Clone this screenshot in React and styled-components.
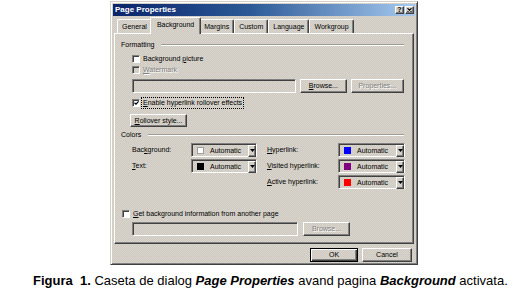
import { Fragment } from 'react';
import styled, { createGlobalStyle, css } from 'styled-components';

const GlobalStyle = createGlobalStyle`
  html, body { margin: 0; padding: 0; background: #fff; }
  body { font-family: "Liberation Sans", Arial, sans-serif; }
`;

const dither = css`
  background-color: #d4d0c8;
  background-image: repeating-conic-gradient(#dad6ce 0 25%, #cdc9c1 0 50%);
  background-size: 2px 2px;
`;

const raised = css`
  border: 1px solid;
  border-color: #fff #404040 #404040 #fff;
  box-shadow: inset -1px -1px #808080;
`;

const sunken = css`
  border: 1px solid;
  border-color: #808080 #fff #fff #808080;
  box-shadow: inset 1px 1px #404040;
`;

const Page = styled.div`
  width: 530px;
  height: 293px;
  display: flex;
  flex-direction: column;
  align-items: flex-start;
  overflow: hidden;
`;

const Dialog = styled.div`
  margin: 1px 0 0 110px;
  width: 308px;
  height: 264px;
  box-sizing: border-box;
  padding: 2px;
  ${dither}
  border: 1px solid;
  border-color: #d4d0c8 #404040 #404040 #d4d0c8;
  box-shadow: inset 1px 1px #fff, inset -1px -1px #808080;
  display: flex;
  flex-direction: column;
  font-size: 7px;
  line-height: 8px;
  color: #000;
`;

const TitleBar = styled.div`
  height: 12px;
  padding: 0 1px 0 2px;
  display: flex;
  align-items: center;
  justify-content: space-between;
  background: linear-gradient(90deg, #0a246a 0%, #2c5996 45%, #a6caf0 100%);
  color: #fff;
  font-weight: bold;
  font-size: 8px;
`;

const CaptionButtons = styled.div`
  display: flex;
  gap: 1px;
`;

const CapButton = styled.div`
  width: 9px;
  height: 8px;
  box-sizing: border-box;
  background: #d4d0c8;
  ${raised}
  display: flex;
  align-items: center;
  justify-content: center;
  color: #000;
  font-size: 7px;
  line-height: 6px;
`;

const Body = styled.div`
  flex: 1;
  padding: 1px 1px 0 1px;
  display: flex;
  flex-direction: column;
`;

const TabStrip = styled.div`
  height: 16px;
  padding-left: 3px;
  display: flex;
  align-items: flex-end;
`;

const Tab = styled.div`
  position: relative;
  z-index: ${p => (p.$active ? 1 : 0)};
  height: ${p => (p.$active ? 17 : 14)}px;
  margin: 0 ${p => (p.$active ? -2 : 0)}px ${p => (p.$active ? -1 : 0)}px;
  padding: ${p => (p.$active ? '0 6px 3px' : '1px 4px 0')};
  box-sizing: border-box;
  ${dither}
  border: 1px solid;
  border-color: #fff #404040 transparent #fff;
  border-bottom: none;
  border-radius: 2px 2px 0 0;
  box-shadow: inset -1px 0 #808080;
  display: flex;
  align-items: center;
  white-space: nowrap;
`;

const Panel = styled.div`
  height: 211px;
  box-sizing: border-box;
  padding: 7px 9px 0 6px;
  ${raised}
  display: flex;
  flex-direction: column;
`;

const GroupHeader = styled.div`
  height: 8px;
  margin-top: ${p => p.$mt || 0}px;
  display: flex;
  align-items: center;
  gap: 7px;
`;

const Rule = styled.div`
  flex: 1;
  border-top: 1px solid #a09c94;
  border-bottom: 1px solid #fff;
`;

const Row = styled.div`
  height: ${p => p.$h || 9}px;
  margin: ${p => p.$mt || 0}px 0 0 ${p => p.$ml || 0}px;
  display: flex;
  align-items: center;
  gap: ${p => p.$gap ?? 3}px;
`;

const CheckBox = styled.span`
  width: 8px;
  height: 8px;
  flex: none;
  box-sizing: border-box;
  ${sunken}
  background: ${p => (p.$disabled ? '#d4d0c8' : '#fff')};
  display: flex;
  align-items: center;
  justify-content: center;
`;

const Label = styled.span`
  white-space: nowrap;
  color: ${p => (p.$disabled ? '#808080' : '#000')};
  text-shadow: ${p => (p.$disabled ? '1px 1px #fff' : 'none')};
  outline: ${p => (p.$focus ? '1px dotted #000' : 'none')};
  padding: ${p => (p.$focus ? '1px 1px' : '0')};
`;

const Key = styled.span`
  text-decoration: underline;
`;

const Field = styled.div`
  width: ${p => p.$w}px;
  height: 14px;
  box-sizing: border-box;
  ${sunken}
`;

const Button = styled.div`
  width: ${p => p.$w}px;
  height: ${p => p.$h || 14}px;
  box-sizing: border-box;
  ${raised}
  ${p => p.$default && css`
    border-color: #000;
    box-shadow: inset 1px 1px #fff, inset -1px -1px #404040, inset -2px -2px #808080;
  `}
  display: flex;
  align-items: center;
  justify-content: center;
  white-space: nowrap;
  color: ${p => (p.$disabled ? '#808080' : '#000')};
  text-shadow: ${p => (p.$disabled ? '1px 1px #fff' : 'none')};
`;

const ColorGrid = styled.div`
  margin: 4px 0 0 11px;
  display: grid;
  grid-template-columns: 59px 66px 81px 67px;
  grid-auto-rows: 14px;
  row-gap: 2px;
  align-items: center;
`;

const ColorLabel = styled.span`
  padding-left: ${p => (p.$right ? 10 : 0)}px;
  white-space: nowrap;
`;

const Combo = styled.div`
  height: 14px;
  box-sizing: border-box;
  ${sunken}
  padding: 1px 0 0 5px;
  display: flex;
  align-items: center;
`;

const Swatch = styled.span`
  width: 7px;
  height: 7px;
  flex: none;
  box-sizing: border-box;
  border: 1px solid ${p => (p.$color === '#fff' ? '#a0a0a0' : p.$color)};
  background: ${p => p.$color};
  margin-right: 6px;
`;

const DropButton = styled.span`
  margin-left: auto;
  width: 8px;
  height: 12px;
  box-sizing: border-box;
  background: #d4d0c8;
  ${raised}
  display: flex;
  align-items: center;
  justify-content: center;
`;

const Footer = styled.div`
  margin-top: 4px;
  padding-right: 2px;
  display: flex;
  justify-content: flex-end;
  gap: 4px;
`;

const Caption = styled.p`
  margin: 8px 0 0 33px;
  font-family: "Liberation Sans", Arial, sans-serif;
  font-size: 13px;
  line-height: 15px;
  color: #000;
  white-space: nowrap;
`;

const Strong = styled.b`
  font-style: ${p => (p.$italic ? 'italic' : 'normal')};
`;

const Check = () => (
  <svg width="5" height="4" viewBox="0 0 5 4">
    <path d="M0.5 1.8 L2 3.2 L4.6 0.4" stroke="#000" strokeWidth="1.2" fill="none" />
  </svg>
);

const Arrow = () => (
  <svg width="5" height="3" viewBox="0 0 5 3">
    <path d="M0 0 H5 L2.5 3 Z" fill="#000" />
  </svg>
);

const CloseGlyph = () => (
  <svg width="5" height="4" viewBox="0 0 5 4">
    <path d="M0.5 0.3 L4.5 3.7 M4.5 0.3 L0.5 3.7" stroke="#000" strokeWidth="1.1" />
  </svg>
);

const tabs = ['General', 'Background', 'Margins', 'Custom', 'Language', 'Workgroup'];

const colorRows = [
  { left: <>Bac<Key>k</Key>ground:</>, leftColor: '#fff', right: <><Key>H</Key>yperlink:</>, rightColor: '#0000ff' },
  { left: <><Key>T</Key>ext:</>, leftColor: '#000', right: <><Key>V</Key>isited hyperlink:</>, rightColor: '#800080' },
  { left: null, right: <><Key>A</Key>ctive hyperlink:</>, rightColor: '#ff0000' },
];

const ColorCombo = ({ color }) => (
  <Combo>
    <Swatch $color={color} />
    Automatic
    <DropButton><Arrow /></DropButton>
  </Combo>
);

export default function App() {
  return (
    <Page>
      <GlobalStyle />
      <Dialog>
        <TitleBar>
          <span>Page Properties</span>
          <CaptionButtons>
            <CapButton>?</CapButton>
            <CapButton><CloseGlyph /></CapButton>
          </CaptionButtons>
        </TitleBar>
        <Body>
          <TabStrip>
            {tabs.map(t => (
              <Tab key={t} $active={t === 'Background'}>{t}</Tab>
            ))}
          </TabStrip>
          <Panel>
            <GroupHeader>
              <span>Formatting</span>
              <Rule />
            </GroupHeader>
            <Row $mt={5} $ml={11}>
              <CheckBox />
              <Label>Background <Key>p</Key>icture</Label>
            </Row>
            <Row $mt={2} $ml={11}>
              <CheckBox $disabled />
              <Label $disabled><Key>W</Key>atermark</Label>
            </Row>
            <Row $mt={5} $ml={11} $h={14} $gap={4}>
              <Field $w={166} />
              <Button $w={47}><span><Key>B</Key>rowse...</span></Button>
              <Button $w={54} $disabled>Properties...</Button>
            </Row>
            <Row $mt={5} $ml={11} $h={10} $gap={2}>
              <CheckBox><Check /></CheckBox>
              <Label $focus><Key>E</Key>nable hyperlink rollover effects</Label>
            </Row>
            <Row $mt={6} $ml={9} $h={13}>
              <Button $w={57} $h={13}><span><Key>R</Key>ollover style...</span></Button>
            </Row>
            <GroupHeader $mt={4}>
              <span>Colors</span>
              <Rule />
            </GroupHeader>
            <ColorGrid>
              {colorRows.map((r, i) => (
                <Fragment key={i}>
                  <ColorLabel>{r.left}</ColorLabel>
                  {r.leftColor ? <ColorCombo color={r.leftColor} /> : <span />}
                  <ColorLabel $right>{r.right}</ColorLabel>
                  <ColorCombo color={r.rightColor} />
                </Fragment>
              ))}
            </ColorGrid>
            <Row $mt={20} $ml={1}>
              <CheckBox />
              <Label><Key>G</Key>et background information from another page</Label>
            </Row>
            <Row $mt={4} $ml={11} $h={14} $gap={5}>
              <Field $w={166} />
              <Button $w={47} $disabled>Browse...</Button>
            </Row>
          </Panel>
          <Footer>
            <Button $w={48} $default>OK</Button>
            <Button $w={50}>Cancel</Button>
          </Footer>
        </Body>
      </Dialog>
      <Caption>
        <Strong>Figura&nbsp; 1.</Strong> Caseta de dialog <Strong $italic>Page Properties</Strong> avand pagina <Strong $italic>Background</Strong> activata.
      </Caption>
    </Page>
  );
}
